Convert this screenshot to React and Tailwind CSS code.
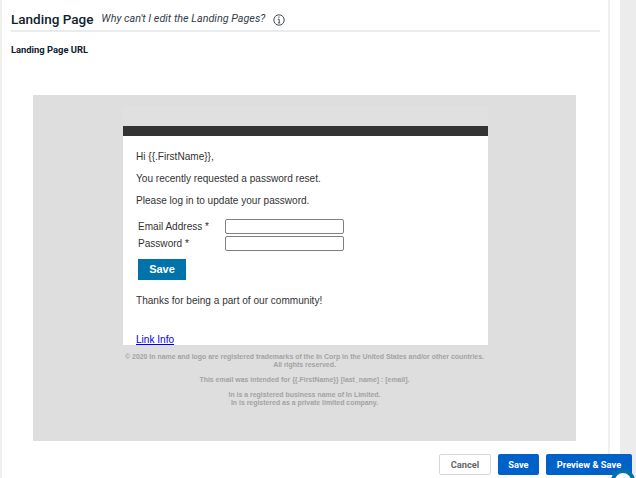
import React from 'react';

const InfoIcon = () => (
  <svg width="12" height="12" viewBox="0 0 12 12" fill="none" stroke="#3f4a54" className="ml-[8px] mt-[1px] shrink-0">
    <circle cx="6" cy="6" r="5.2" strokeWidth="1" />
    <path d="M4.9 5.3H6.2V8.8M4.9 8.9H7.2" strokeWidth="1" />
    <path d="M5.4 3.2H6.5" strokeWidth="1.3" />
  </svg>
);

const EmailPreview = () => (
  <div className="mt-[40px] ml-[22px] w-[543px] h-[346px] bg-[#dedede] pt-[11px] font-['Liberation_Sans',sans-serif]">
    <div className="mx-[90px] w-[365px]">
      <div className="h-[20px] bg-[#e0e0e0]" />
      <div className="h-[10px] bg-[#333333]" />
      <div className="h-[209px] bg-white pl-[13px] pt-[14px] text-[10.07px] leading-[13px] text-[#333333] overflow-hidden">
        <p>Hi {'{{.FirstName}}'},</p>
        <p className="mt-[9px]">You recently requested a password reset.</p>
        <p className="mt-[9px]">Please log in to update your password.</p>
        <div className="mt-[12px] ml-[2px] grid grid-cols-[87px_119px] gap-y-[2px] items-center">
          <span>Email Address *</span>
          <div className="h-[15px] border border-[#808080] rounded-[2px] bg-white" />
          <span>Password *</span>
          <div className="h-[15px] border border-[#808080] rounded-[2px] bg-white" />
        </div>
        <div className="mt-[8px] ml-[2px] w-[48px] h-[21px] bg-[#0073aa] text-white font-bold text-[11px] flex items-center justify-center">Save</div>
        <p className="mt-[14px]">Thanks for being a part of our community!</p>
        <p className="mt-[26px] text-[#0000ee] underline">Link Info</p>
      </div>
    </div>
    <div className="mt-[8px] text-center text-[#a3a3a3] font-bold text-[6.93px] leading-[8px]">
      <p>© 2020 In name and logo are registered trademarks of the In Corp in the United States and/or other countries.</p>
      <p>All rights reserved.</p>
      <p className="mt-[7px]">This email was intended for {'{{.FirstName}}'} [last_name] : [email].</p>
      <p className="mt-[7px]">In is a registered business name of In Limited.</p>
      <p>In is registered as a private limited company.</p>
    </div>
  </div>
);

export default function App() {
  return (
    <div className="relative flex w-[636px] h-[478px] overflow-hidden bg-white font-['Roboto',sans-serif]">
      <div className="w-[610px] h-full border-l-2 border-r-2 border-[#f0f0f0] pl-[9px]">
        <div className="mr-[8px] h-[32px] border-b-2 border-[#e8ecec] flex items-center pt-[8px]">
          <h1 className="text-[13.5px] font-medium text-[#10212e]">Landing Page</h1>
          <span className="ml-[8px] text-[10.8px] italic text-[#33404a]">Why can't I edit the Landing Pages?</span>
          <InfoIcon />
        </div>
        <div className="mt-[13px] h-[10px] flex items-center text-[9.4px] font-bold text-[#10212e]">Landing Page URL</div>
        <EmailPreview />
        <div className="relative z-10 mt-[13px] ml-[428px] flex gap-[7px] text-[9.3px] font-bold">
          <button className="w-[52px] h-[21px] shrink-0 border border-[#d8d8d8] rounded-[2px] text-[#666666]">Cancel</button>
          <button className="w-[41px] h-[21px] shrink-0 bg-[#0061c8] rounded-[2px] text-white">Save</button>
          <button className="w-[86px] h-[21px] shrink-0 bg-[#0061c8] rounded-[2px] text-white">Preview & Save</button>
        </div>
      </div>
      <div className="w-[10px]" />
      <div className="flex-1 bg-[#ececec]" />
      <div className="absolute z-20 left-[611px] top-[469px] w-[24px] h-[24px] rounded-full border-[4px] border-[#0073aa] bg-white" />
    </div>
  );
}
